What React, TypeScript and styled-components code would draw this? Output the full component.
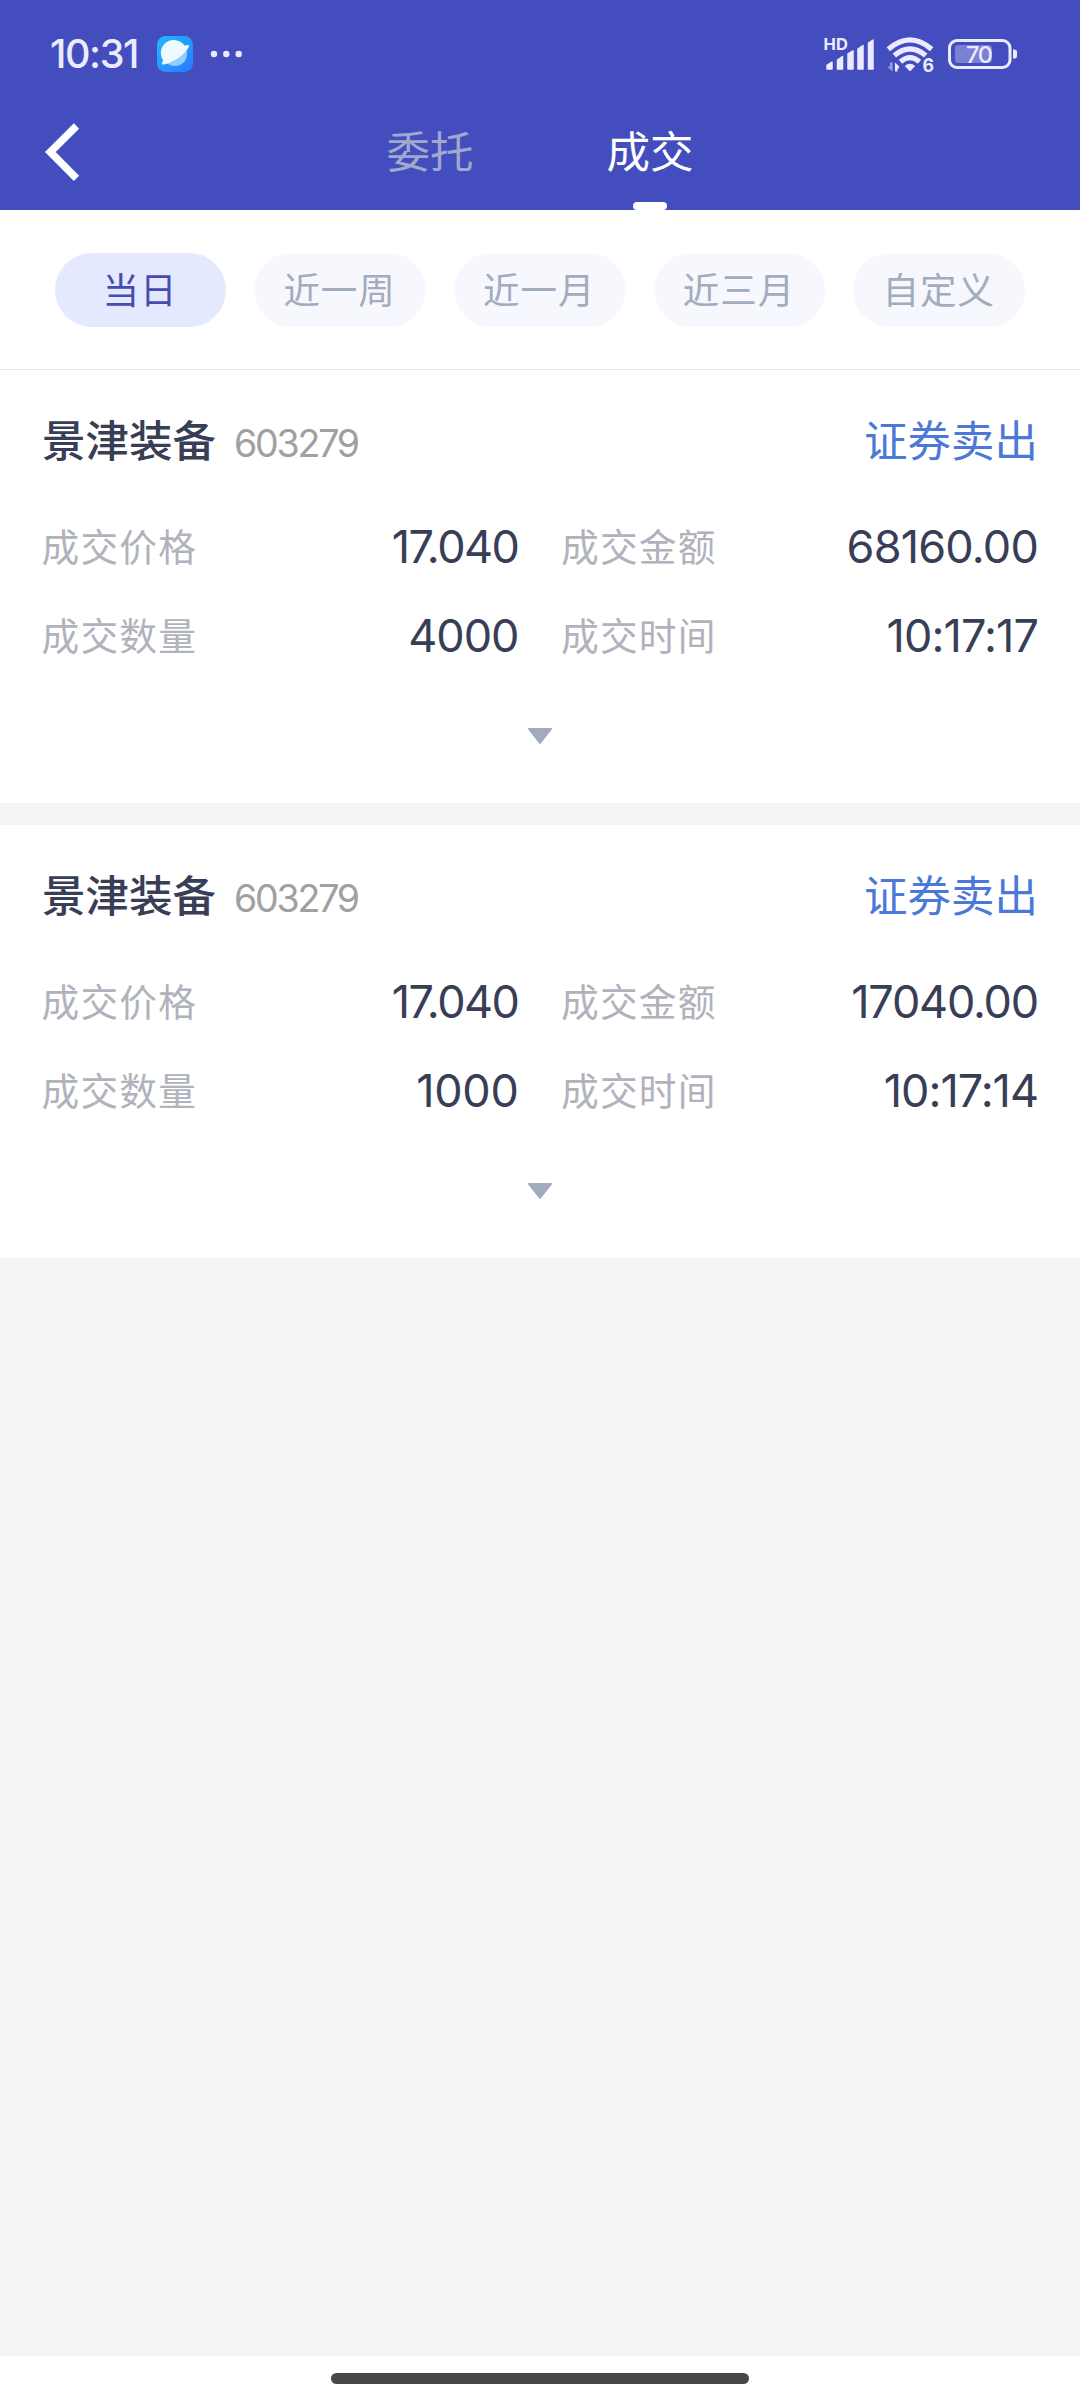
import React from "react";
import styled, { createGlobalStyle } from "styled-components";

const GlobalStyle = createGlobalStyle`
  * { box-sizing: border-box; }
  body {
    margin: 0;
    background: #f3f4f6;
    font-family: Inter, "Noto Sans CJK SC", sans-serif;
  }
`;

const Screen = styled.div`
  width: 1080px;
  height: 2400px;
  display: flex;
  flex-direction: column;
  background: #f3f4f6;
  overflow: hidden;
`;

const Header = styled.header`
  height: 210px;
  background: #444dbe;
  display: flex;
  flex-direction: column;
`;

const StatusBar = styled.div`
  height: 94px;
  padding: 14px 62px 0 50px;
  display: flex;
  align-items: center;
  justify-content: space-between;
`;

const StatusGroup = styled.div`
  display: flex;
  align-items: center;
`;

const Clock = styled.span`
  width: 107px;
  font-size: 39.5px;
  font-weight: 500;
  line-height: 80px;
  letter-spacing: -1.4px;
  color: #ebebff;
  white-space: nowrap;
`;

const NavBar = styled.nav`
  flex: 1;
  display: flex;
`;

const BackButton = styled.button`
  width: 320px;
  height: 116px;
  padding: 24px 0 0 40px;
  border: 0;
  background: none;
  display: flex;
  align-items: flex-start;
`;

const Tab = styled.div<{ $active?: boolean }>`
  width: 220px;
  display: flex;
  flex-direction: column;
  align-items: center;
  justify-content: space-between;
  font-size: 43.5px;
  line-height: 64px;
  padding-top: 26px;
  color: ${(p) => (p.$active ? "#ffffff" : "#a1a8cd")};
`;

const Indicator = styled.span`
  width: 34px;
  height: 8px;
  border-radius: 4px;
  background: #fff;
`;

const Filters = styled.div`
  height: 160px;
  padding: 43px 55px 0 54.6px;
  display: flex;
  gap: 28px;
  background: #fff;
  border-bottom: 1px solid #e3e4e6;
`;

const Pill = styled.button<{ $active?: boolean }>`
  flex: 1;
  height: 74px;
  padding: 0 1px 3px 0;
  border: 0;
  border-radius: 37px;
  font-family: inherit;
  font-size: 36.5px;
  letter-spacing: 1px;
  color: ${(p) => (p.$active ? "#464dae" : "#a3acbe")};
  background: ${(p) => (p.$active ? "#e5e9ff" : "#f6f8fd")};
`;

const List = styled.main`
  flex: 1;
  display: flex;
  flex-direction: column;
  gap: 22px;
`;

const Card = styled.section`
  height: 433px;
  padding: 31px 42px 0;
  background: #fff;
  display: flex;
  flex-direction: column;
`;

const CardHead = styled.div`
  height: 100px;
  display: flex;
  align-items: flex-start;
  line-height: 80px;
`;

const StockName = styled.span`
  font-size: 43.5px;
  font-weight: 500;
  color: #383e56;
`;

const StockCode = styled.span`
  flex: 1;
  padding: 3px 0 0 18px;
  font-size: 37.5px;
  letter-spacing: -2.2px;
  color: #a0a0a0;
`;

const Side = styled.span`
  font-size: 43.5px;
  color: #4c78d8;
`;

const Fields = styled.dl`
  margin: 0;
  display: grid;
  grid-template-columns: 1fr 1fr;
  grid-auto-rows: 89px;
  column-gap: 43px;
`;

const Field = styled.div`
  display: flex;
  align-items: center;
  justify-content: space-between;
`;

const Label = styled.dt`
  font-size: 37.7px;
  letter-spacing: 1.2px;
  padding-bottom: 3px;
  margin-left: -0.5px;
  color: #b0b2bc;
`;

const Value = styled.dd<{ $spacing: number }>`
  margin: 0;
  padding-top: 2px;
  font-size: 45px;
  letter-spacing: ${(p) => p.$spacing}px;
  color: #383e56;
`;

const Expand = styled.div`
  display: flex;
  justify-content: center;
  padding-top: 49px;
`;

const HomeArea = styled.footer`
  height: 44px;
  padding-top: 17px;
  display: flex;
  justify-content: center;
  background: #fff;
`;

const HomeBar = styled.span`
  width: 418px;
  height: 11px;
  border-radius: 6px;
  background: #474747;
`;

const StatusLeft = () => (
  <svg width="92" height="36" viewBox="157 36 92 36">
    <defs>
      <linearGradient id="app" x1="0" y1="0" x2="1" y2="1">
        <stop offset="0" stopColor="#20baff" />
        <stop offset="1" stopColor="#2a78ff" />
      </linearGradient>
    </defs>
    <rect x="157" y="36" width="36" height="36" rx="8.5" fill="url(#app)" />
    <circle cx="175" cy="54" r="12" fill="#90ccff" />
    <path
      d="M163.200 60.500Q161.500 63 162.200 64.500Q166 65 174 60.500Q183 56 188 48.500Q189.500 46 188.800 45L184.500 45.500A12.300 12.300 0 0 0 163.200 60.500Z"
      fill="#effaff"
    />
    <circle cx="214" cy="54" r="3.200" fill="#ebebff" />
    <circle cx="226.300" cy="54" r="3.200" fill="#ebebff" />
    <circle cx="238.700" cy="54" r="3.200" fill="#ebebff" />
  </svg>
);

const StatusRight = () => (
  <svg width="196" height="52" viewBox="822 28 196 52" fill="#ebebff">
    <text x="823.500" y="50" fontFamily="Inter" fontSize="16.500" fontWeight="700" textLength="24.500">
      HD
    </text>
    <path
      d="M827 65.500L832 62.200V69H827ZM837.500 60L842.500 56.500V69H837.500ZM848 54L853 51V69H848ZM858 49L863 45.500V69H858ZM868.500 43L873 40V69H868.500Z"
      stroke="#ebebff"
      strokeWidth="1.500"
      strokeLinejoin="round"
    />
    <g fill="none" stroke="#ebebff" strokeWidth="5.200">
      <path d="M888.300 49.200Q910 30.500 931.700 49.200" />
      <path d="M894.300 55.500Q910 42.500 925.700 55.500" />
      <path d="M900.500 61.700Q910 53.500 919.500 61.700" />
    </g>
    <path d="M904.800 66Q910 61.500 915.200 66L911 70.500Q910 71.500 909 70.500Z" />
    <path d="M892.500 62.500V71.500L887 66.500H890V62.500Z" opacity="0.500" />
    <path d="M895 71.500V62.500L899 66.200V68.500H897.500V71.500Z" />
    <text x="922.500" y="72.300" fontFamily="Inter" fontSize="18.500" fontWeight="700" textLength="11.500" lengthAdjust="spacingAndGlyphs">
      6
    </text>
    <rect x="949.500" y="40.500" width="60.500" height="27" rx="7.500" fill="none" stroke="#ebebff" strokeWidth="3" />
    <rect x="955" y="45" width="37" height="18" rx="3" opacity="0.320" />
    <path d="M1013 49.500Q1017 49 1017 52V56Q1017 59 1013 58.500Z" />
    <text x="979.500" y="62.600" fontFamily="Inter" fontSize="23.500" fontWeight="500" textAnchor="middle" textLength="27">
      70
    </text>
  </svg>
);

const BackIcon = () => (
  <svg width="42" height="68" viewBox="40 118 42 68">
    <path d="M76.500 126L50.300 152L76.500 178.300" fill="none" stroke="#fff" strokeWidth="7.500" />
  </svg>
);

const ArrowIcon = () => (
  <svg width="26" height="18" viewBox="0 0 26 18">
    <path
      d="M2 1H24L13 15Z"
      fill="#a2abbf"
      stroke="#a2abbf"
      strokeWidth="2"
      strokeLinejoin="round"
    />
  </svg>
);

type DealField = { label: string; value: string; spacing: number };
type Deal = { name: string; code: string; side: string; fields: DealField[] };

const deals: Deal[] = [
  {
    name: "景津装备",
    code: "603279",
    side: "证券卖出",
    fields: [
      { label: "成交价格", value: "17.040", spacing: -1.5 },
      { label: "成交金额", value: "68160.00", spacing: -0.8 },
      { label: "成交数量", value: "4000", spacing: -1 },
      { label: "成交时间", value: "10:17:17", spacing: -0.9 },
    ],
  },
  {
    name: "景津装备",
    code: "603279",
    side: "证券卖出",
    fields: [
      { label: "成交价格", value: "17.040", spacing: -1.5 },
      { label: "成交金额", value: "17040.00", spacing: -1.2 },
      { label: "成交数量", value: "1000", spacing: -0.3 },
      { label: "成交时间", value: "10:17:14", spacing: -1 },
    ],
  },
];

const ranges = ["当日", "近一周", "近一月", "近三月", "自定义"];

export default function App() {
  return (
    <Screen>
      <GlobalStyle />
      <Header>
        <StatusBar>
          <StatusGroup>
            <Clock>10:31</Clock>
            <StatusLeft />
          </StatusGroup>
          <StatusRight />
        </StatusBar>
        <NavBar>
          <BackButton aria-label="返回">
            <BackIcon />
          </BackButton>
          <Tab>委托</Tab>
          <Tab $active>
            成交
            <Indicator />
          </Tab>
        </NavBar>
      </Header>
      <Filters>
        {ranges.map((r, i) => (
          <Pill key={r} $active={i === 0}>
            {r}
          </Pill>
        ))}
      </Filters>
      <List>
        {deals.map((d, i) => (
          <Card key={i}>
            <CardHead>
              <StockName>{d.name}</StockName>
              <StockCode>{d.code}</StockCode>
              <Side>{d.side}</Side>
            </CardHead>
            <Fields>
              {d.fields.map((f) => (
                <Field key={f.label}>
                  <Label>{f.label}</Label>
                  <Value $spacing={f.spacing}>{f.value}</Value>
                </Field>
              ))}
            </Fields>
            <Expand>
              <ArrowIcon />
            </Expand>
          </Card>
        ))}
      </List>
      <HomeArea>
        <HomeBar />
      </HomeArea>
    </Screen>
  );
}
